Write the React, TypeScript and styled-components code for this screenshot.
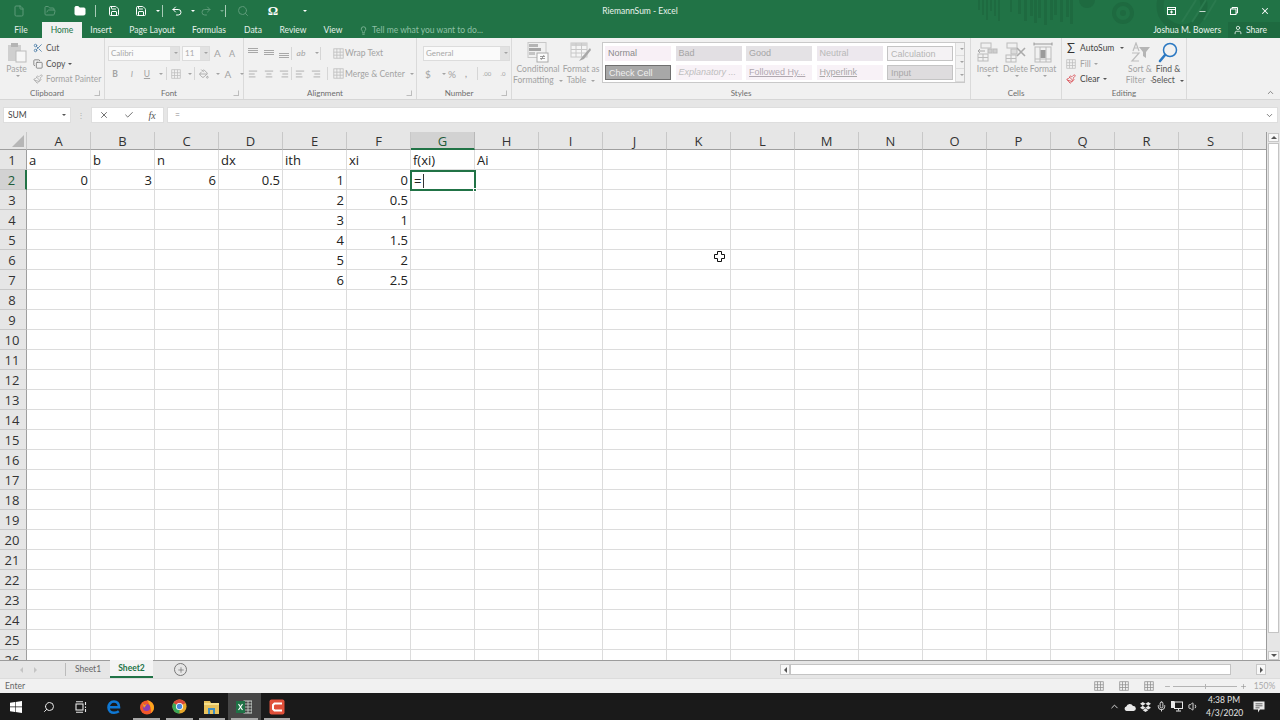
import React from 'react';
import styled, { createGlobalStyle } from 'styled-components';
import {
  AlignCenter, AlignLeft, AlignRight, Check, ChevronDown, ChevronUp, Copy, File, Folder, FolderOpen,
  Lightbulb, Mic, Minus, Paintbrush, PaintBucket, Plus, Redo2, Save, Scissors, Search, Undo2, User, Volume1, X,
} from 'lucide-react';

const GREEN = '#217346';
const UI_FONT = 'Lato, "Open Sans", "Liberation Sans", sans-serif';
const COLUMNS = 'A B C D E F G H I J K L M N O P Q R S'.split(' ');
const ROWS = Array.from({ length: 26 }, (_, i) => i + 1);

const CELLS: Record<string, string> = {
  A1: 'a', B1: 'b', C1: 'n', D1: 'dx', E1: 'ith', F1: 'xi', G1: 'f(xi)', H1: 'Ai',
  A2: '0', B2: '3', C2: '6', D2: '0.5', E2: '1', F2: '0',
  E3: '2', F3: '0.5', E4: '3', F4: '1', E5: '4', F5: '1.5', E6: '5', F6: '2', E7: '6', F7: '2.5',
};

const GlobalStyle = createGlobalStyle`
  html, body { margin: 0; padding: 0; background: #e6e6e6; overflow: hidden; }
  body { font-family: ${UI_FONT}; }
`;

const Page = styled.div`
  width: 1280px;
  height: 720px;
  display: flex;
  flex-direction: column;
  overflow: hidden;
  background: #e6e6e6;
`;

const Header = styled.header`
  position: relative;
  height: 38px;
  flex: none;
  background: ${GREEN};
  overflow: hidden;
`;

const HeaderArt = styled.svg`
  position: absolute;
  left: 960px;
  top: 0;
`;

const TitleRow = styled.div`
  position: relative;
  height: 22px;
  display: grid;
  grid-template-columns: 1fr auto 1fr;
  align-items: center;
`;

const QuickAccess = styled.div`
  display: flex;
  align-items: center;
  padding-left: 6px;
`;

const QatSlot = styled.span<{ $w: number; $faded?: boolean }>`
  width: ${(p) => p.$w}px;
  flex: none;
  display: flex;
  justify-content: center;
  align-items: center;
  color: ${(p) => (p.$faded ? '#5c9a78' : '#ffffff')};
  font-size: 13px;
  font-family: "Liberation Serif", serif;
  font-weight: 700;
`;

const QatDivider = styled.span`
  width: 1px;
  height: 12px;
  flex: none;
  background: #a8cbb7;
  margin: 0 3px;
`;

const Title = styled.div`
  color: #eaf4ee;
  font-size: 8.5px;
`;

const WindowControls = styled.div`
  display: flex;
  justify-content: flex-end;
  align-items: center;
  color: #fff;
`;

const ControlSlot = styled.span`
  width: 31px;
  display: flex;
  justify-content: center;
`;

const TabRow = styled.nav`
  position: relative;
  height: 16px;
  display: flex;
  align-items: stretch;
  font-size: 8.5px;
  color: #e4f0e9;
`;

const Tab = styled.div<{ $w: number; $active?: boolean }>`
  width: ${(p) => p.$w}px;
  display: flex;
  align-items: center;
  justify-content: center;
  background: ${(p) => (p.$active ? '#f1f1f1' : 'transparent')};
  color: ${(p) => (p.$active ? GREEN : 'inherit')};
`;

const TellMe = styled.div`
  display: flex;
  align-items: center;
  gap: 4px;
  margin-left: 7px;
  color: #8fc0a5;
`;

const Account = styled.div`
  margin-left: auto;
  display: flex;
  align-items: center;
  font-size: 8.5px;
  color: #eaf4ee;
`;

const ShareButton = styled.div`
  display: flex;
  align-items: center;
  gap: 3px;
  height: 16px;
  margin-left: 7px;
  padding: 0 13px 0 5px;
  background: #1e6a40;
`;

const Ribbon = styled.section`
  position: relative;
  height: 62px;
  flex: none;
  display: flex;
  background: #f1f1f1;
  border-bottom: 1px solid #d6d6d6;
  box-sizing: border-box;
  font-size: 8.5px;
  color: #a3a3a3;
`;

const Group = styled.div<{ $w: number }>`
  width: ${(p) => p.$w}px;
  flex: none;
  display: flex;
  flex-direction: column;
  box-sizing: border-box;
  border-right: 1px solid #dadada;
`;

const GroupBody = styled.div`
  flex: 1;
  min-height: 0;
  display: flex;
  padding-top: 2px;
`;

const GroupFoot = styled.div<{ $launcher?: boolean }>`
  position: relative;
  height: 11px;
  line-height: 11px;
  flex: none;
  text-align: center;
  color: #6d6d6d;
  font-size: 8px;
  padding-right: ${(p) => (p.$launcher ? 10 : 0)}px;
`;

const Launcher = styled.span`
  position: absolute;
  right: 4px;
  bottom: 3px;
  width: 4px;
  height: 4px;
  border: 1px solid #bdbdbd;
  border-top-color: transparent;
  border-left-color: transparent;
`;

const LargeButton = styled.div<{ $w: number; $ml?: number; $dark?: boolean }>`
  width: ${(p) => p.$w}px;
  margin-left: ${(p) => p.$ml ?? 0}px;
  padding-top: 2px;
  flex: none;
  display: flex;
  flex-direction: column;
  align-items: center;
  line-height: 11px;
  text-align: center;
  color: ${(p) => (p.$dark ? '#555' : '#a3a3a3')};
  white-space: nowrap;
  svg { margin-bottom: 1px; flex: none; }
`;

const Stack = styled.div<{ $w?: number; $gap?: number; $top?: number }>`
  ${(p) => (p.$w ? `width: ${p.$w}px;` : '')}
  flex: none;
  display: flex;
  flex-direction: column;
  gap: ${(p) => p.$gap ?? 0}px;
  padding-top: ${(p) => p.$top ?? 0}px;
`;

const ToolRow = styled.div<{ $h?: number }>`
  display: flex;
  align-items: center;
  height: ${(p) => p.$h ?? 15}px;
  white-space: nowrap;
`;

const Tool = styled.span<{ $w: number; $ml?: number; $color?: string; $bold?: boolean; $italic?: boolean; $under?: boolean; $size?: number }>`
  width: ${(p) => p.$w}px;
  margin-left: ${(p) => p.$ml ?? 0}px;
  flex: none;
  display: flex;
  align-items: center;
  justify-content: center;
  color: ${(p) => p.$color ?? '#a3a3a3'};
  font-weight: ${(p) => (p.$bold ? 700 : 400)};
  font-style: ${(p) => (p.$italic ? 'italic' : 'normal')};
  text-decoration: ${(p) => (p.$under ? 'underline' : 'none')};
  font-size: ${(p) => p.$size ?? 8.5}px;
`;

const ToolSep = styled.span<{ $ml?: number }>`
  width: 1px;
  height: 13px;
  margin-left: ${(p) => p.$ml ?? 0}px;
  background: #d6d6d6;
  flex: none;
`;

const ToolText = styled.span<{ $color?: string; $ml?: number }>`
  color: ${(p) => p.$color ?? '#a3a3a3'};
  margin-left: ${(p) => p.$ml ?? 3}px;
`;

const Combo = styled.div<{ $w: number; $ml: number }>`
  width: ${(p) => p.$w}px;
  margin-left: ${(p) => p.$ml}px;
  height: 15px;
  flex: none;
  box-sizing: border-box;
  background: #fafafa;
  border: 1px solid #dcdcdc;
  display: flex;
  align-items: center;
  justify-content: space-between;
  padding-left: 2px;
  color: #a8a8a8;
  font-size: 8px;
`;

const ComboArrow = styled.span`
  width: 9px;
  height: 100%;
  background: #e2e2e2;
  display: flex;
  align-items: center;
  justify-content: center;
`;

const Caret = styled.span<{ $color?: string }>`
  display: inline-block;
  width: 0;
  height: 0;
  border-left: 2px solid transparent;
  border-right: 2px solid transparent;
  border-top: 2px solid ${(p) => p.$color ?? '#a3a3a3'};
  margin-left: 3px;
  vertical-align: middle;
`;

const Gallery = styled.div`
  width: 363px;
  height: 41px;
  flex: none;
  box-sizing: border-box;
  border: 1px solid #c9c9c9;
  background: #fff;
  display: flex;
  margin: 2px 0 0 4px;
`;

const GalleryGrid = styled.div`
  flex: 1;
  display: grid;
  grid-template-columns: repeat(5, 66px);
  grid-auto-rows: 15px;
  column-gap: 4.5px;
  row-gap: 4px;
  padding: 3px 2px;
`;

const StyleChip = styled.div<{ $bg: string; $color: string; $border?: string; $italic?: boolean; $under?: boolean }>`
  background: ${(p) => p.$bg};
  color: ${(p) => p.$color};
  border: ${(p) => p.$border ?? 'none'};
  box-sizing: border-box;
  font-family: "Liberation Sans", sans-serif;
  font-size: 9px;
  line-height: 14px;
  padding-left: 3px;
  font-style: ${(p) => (p.$italic ? 'italic' : 'normal')};
  text-decoration: ${(p) => (p.$under ? 'underline' : 'none')};
  white-space: nowrap;
  overflow: hidden;
`;

const GalleryScroll = styled.div`
  width: 10px;
  display: flex;
  flex-direction: column;
  background: #f1f1f1;
  border-left: 1px solid #dcdcdc;
`;

const GalleryStep = styled.div`
  flex: 1;
  display: flex;
  align-items: center;
  justify-content: center;
  border-bottom: 1px solid #dcdcdc;
`;

const CollapseRibbon = styled.span`
  position: absolute;
  right: 5px;
  bottom: 0;
  color: #666;
`;

const FormulaBar = styled.div`
  height: 16px;
  flex: none;
  display: flex;
  align-items: stretch;
  margin: 7px 2px 9px 3px;
  font-size: 8.5px;
`;

const NameBox = styled.div`
  width: 68px;
  box-sizing: border-box;
  background: #fff;
  border: 1px solid #dedede;
  display: flex;
  align-items: center;
  justify-content: space-between;
  padding: 0 4px;
  color: #444;
`;

const GripDots = styled.div`
  width: 20px;
  display: flex;
  align-items: center;
  justify-content: center;
  color: #b0b0b0;
  font-size: 8px;
`;

const FormulaButtons = styled.div`
  width: 73px;
  box-sizing: border-box;
  background: #fff;
  border: 1px solid #dedede;
  display: flex;
  align-items: center;
  justify-content: space-around;
  color: #555;
`;

const FxLabel = styled.span`
  font-family: "Liberation Serif", serif;
  font-style: italic;
  font-size: 10px;
`;

const FormulaInput = styled.div`
  flex: 1;
  margin-left: 3px;
  box-sizing: border-box;
  background: #fff;
  border: 1px solid #dedede;
  display: flex;
  align-items: center;
  justify-content: space-between;
  padding: 0 3px 0 7px;
  color: #888;
`;

const SheetArea = styled.div`
  height: 528px;
  flex: none;
  display: flex;
  overflow: hidden;
`;

const Grid = styled.div`
  position: relative;
  width: 1267px;
  flex: none;
  display: grid;
  grid-template-columns: 27px repeat(19, 64px) 24px;
  grid-template-rows: 18px;
  grid-auto-rows: 20px;
  overflow: hidden;
  background: #fff;
  box-sizing: border-box;
  border-right: 1px solid #9c9c9c;
  font-family: "Open Sans", "Noto Sans", sans-serif;
  font-size: 13px;
  color: #222;
`;

const Corner = styled.div`
  position: relative;
  background: #e6e6e6;
  border-right: 1px solid #c8c8c8;
  border-bottom: 1px solid #9f9f9f;
  box-sizing: border-box;
  &::after {
    content: '';
    position: absolute;
    right: 2px;
    bottom: 2px;
    border-left: 12px solid transparent;
    border-bottom: 12px solid #b6b6b6;
  }
`;

const ColumnHead = styled.div<{ $active?: boolean }>`
  background: ${(p) => (p.$active ? '#d2d2d2' : '#e6e6e6')};
  border-right: 1px solid ${(p) => (p.$active ? '#b8b8b8' : '#c8c8c8')};
  border-bottom: ${(p) => (p.$active ? `2px solid ${GREEN}` : '1px solid #9f9f9f')};
  box-sizing: border-box;
  display: flex;
  align-items: center;
  justify-content: center;
  padding-top: 1px;
  color: ${(p) => (p.$active ? '#1f5c3a' : '#333')};
`;

const RowHead = styled.div<{ $active?: boolean }>`
  background: ${(p) => (p.$active ? '#d2d2d2' : '#e6e6e6')};
  border-right: ${(p) => (p.$active ? `2px solid ${GREEN}` : '1px solid #9f9f9f')};
  border-bottom: 1px solid #c8c8c8;
  box-sizing: border-box;
  display: flex;
  align-items: center;
  justify-content: center;
  padding: 1px 2px 0 0;
  color: ${(p) => (p.$active ? '#1f5c3a' : '#333')};
`;

const Cell = styled.div<{ $numeric?: boolean }>`
  border-right: 1px solid #dcdcdc;
  border-bottom: 1px solid #dcdcdc;
  box-sizing: border-box;
  display: flex;
  align-items: center;
  justify-content: ${(p) => (p.$numeric ? 'flex-end' : 'flex-start')};
  padding: 1px 2px 0 2px;
  white-space: nowrap;
  overflow: visible;
`;

const ActiveCell = styled.div`
  position: relative;
  box-sizing: border-box;
  border: 2px solid ${GREEN};
  margin: 0 -1px 0 -1px;
  height: 21px;
  display: flex;
  align-items: center;
  padding-left: 2px;
  z-index: 1;
  &::after {
    content: '';
    position: absolute;
    right: -3px;
    bottom: -3px;
    width: 4px;
    height: 4px;
    background: ${GREEN};
    border: 1px solid #fff;
    box-sizing: border-box;
  }
`;

const TextCaret = styled.span`
  width: 1px;
  height: 14px;
  margin-left: 2px;
  background: #333;
`;

const MouseCursor = styled.svg`
  position: absolute;
  left: 714px;
  top: 119px;
  z-index: 2;
`;

const VerticalScroll = styled.div`
  flex: 1;
  display: flex;
  flex-direction: column;
  padding: 1px 1px 0 1px;
  background: #e6e6e6;
`;

const ScrollButton = styled.div`
  height: 9px;
  flex: none;
  background: #f8f8f8;
  border: 1px solid #c8c8c8;
  box-sizing: border-box;
  display: flex;
  align-items: center;
  justify-content: center;
`;

const ScrollThumb = styled.div`
  width: 100%;
  height: 490px;
  margin-top: 1px;
  box-sizing: border-box;
  background: #fff;
  border: 1px solid #c4c4c4;
`;

const ScrollTrack = styled.div`
  flex: 1;
`;

const SheetBar = styled.div`
  height: 18px;
  flex: none;
  display: flex;
  align-items: stretch;
  border-top: 1px solid #9c9c9c;
  box-sizing: border-box;
  font-size: 8.5px;
  color: #666;
`;

const SheetNav = styled.div`
  width: 66px;
  display: flex;
  align-items: center;
  justify-content: space-evenly;
  padding: 0 16px 0 8px;
  box-sizing: border-box;
  border-right: 1px solid #bbb;
  margin: 2px 0;
`;

const SheetTab = styled.div<{ $active?: boolean; $w: number }>`
  width: ${(p) => p.$w}px;
  display: flex;
  align-items: center;
  justify-content: center;
  font-weight: ${(p) => (p.$active ? 700 : 400)};
  color: ${(p) => (p.$active ? GREEN : '#666')};
  background: ${(p) => (p.$active ? '#f4f4f4' : 'transparent')};
  border-bottom: ${(p) => (p.$active ? `2px solid ${GREEN}` : 'none')};
  box-sizing: border-box;
  margin-top: -1px;
`;

const AddSheet = styled.div`
  width: 11px;
  height: 11px;
  margin: 2px 0 0 21px;
  border-radius: 50%;
  border: 1px solid #777;
  display: flex;
  align-items: center;
  justify-content: center;
  color: #666;
`;

const HorizontalScroll = styled.div`
  margin-left: auto;
  width: 486px;
  margin-right: 14px;
  display: flex;
  align-items: center;
`;

const HScrollButton = styled.div`
  width: 10px;
  height: 11px;
  flex: none;
  box-sizing: border-box;
  background: #f8f8f8;
  border: 1px solid #c8c8c8;
  display: flex;
  align-items: center;
  justify-content: center;
`;

const HScrollThumb = styled.div`
  width: 441px;
  height: 11px;
  box-sizing: border-box;
  background: #fff;
  border: 1px solid #c4c4c4;
  flex: none;
`;

const HScrollRest = styled.div`
  flex: 1;
`;

const TriLeft = styled.span<{ $color?: string }>`
  border-top: 3px solid transparent;
  border-bottom: 3px solid transparent;
  border-right: 3px solid ${(p) => p.$color ?? '#555'};
`;

const TriRight = styled.span<{ $color?: string }>`
  border-top: 3px solid transparent;
  border-bottom: 3px solid transparent;
  border-left: 3px solid ${(p) => p.$color ?? '#555'};
`;

const TriUp = styled.span`
  border-left: 3px solid transparent;
  border-right: 3px solid transparent;
  border-bottom: 3px solid #555;
`;

const TriDown = styled.span`
  border-left: 3px solid transparent;
  border-right: 3px solid transparent;
  border-top: 3px solid #555;
`;

const StatusBar = styled.footer`
  height: 15px;
  flex: none;
  display: flex;
  align-items: center;
  padding-left: 5px;
  font-size: 8.5px;
  color: #666;
  background: #f1f1f1;
  border-top: 1px solid #dcdcdc;
  box-sizing: border-box;
`;

const StatusRight = styled.div`
  margin-left: auto;
  display: flex;
  align-items: center;
  color: #8d8d8d;
`;

const ViewSlot = styled.span<{ $w: number }>`
  width: ${(p) => p.$w}px;
  display: flex;
  justify-content: center;
`;

const ZoomTrack = styled.span`
  position: relative;
  width: 64px;
  height: 1px;
  background: #b4b4b4;
  &::after {
    content: '';
    position: absolute;
    left: 32px;
    top: -2px;
    width: 1px;
    height: 5px;
    background: #b4b4b4;
  }
`;

const ZoomValue = styled.span`
  width: 31px;
  text-align: center;
  color: #aaa;
`;

const Taskbar = styled.footer`
  height: 27px;
  flex: none;
  display: flex;
  align-items: stretch;
  background: #1a1a1a;
  color: #e8e8e8;
`;

const TaskSlot = styled.div<{ $open?: boolean; $current?: boolean }>`
  position: relative;
  width: 32.6px;
  flex: none;
  display: flex;
  align-items: center;
  justify-content: center;
  background: ${(p) => (p.$current ? '#464646' : 'transparent')};
  &::after {
    content: '';
    display: ${(p) => (p.$open ? 'block' : 'none')};
    position: absolute;
    left: 3px;
    right: 3px;
    bottom: 0;
    height: 2px;
    background: #a8a8a8;
  }
`;

const MirroredSearch = styled(Search)`
  transform: scaleX(-1);
`;

const Tray = styled.div`
  margin-left: auto;
  display: flex;
  align-items: center;
`;

const TraySlot = styled.span`
  width: 15.8px;
  display: flex;
  justify-content: center;
`;

const Clock = styled.div`
  width: 36px;
  margin-left: 5px;
  text-align: center;
  font-size: 8.5px;
  line-height: 13px;
  color: #e4e4e4;
  white-space: nowrap;
`;

const Notify = styled.div`
  width: 38px;
  display: flex;
  justify-content: center;
  padding-right: 4px;
  box-sizing: border-box;
`;

/* ---- drawn icons ---- */

const SheetGlyph = ({ w = 20, h = 20, color = '#bdbdbd' }: { w?: number; h?: number; color?: string }) => (
  <svg width={w} height={h} viewBox="0 0 20 20" fill="none" stroke={color} strokeWidth="1.5">
    <rect x="1.5" y="1.5" width="17" height="17" />
    <path d="M1.5 7.5h17M1.5 13h17M7 1.5v17M13 1.5v17" />
  </svg>
);

const VAlignIcon = ({ y }: { y: number }) => (
  <svg width="10" height="10" viewBox="0 0 10 10" stroke="#a8a8a8">
    <path d={`M0 ${y + 0.5}h10M0 ${y + 2.5}h10`} />
    <path d={`M0 ${y + 4.5}h10`} />
  </svg>
);

const PasteIcon = () => (
  <svg width="20" height="21" viewBox="0 0 20 21">
    <rect x="1" y="3" width="13" height="16" fill="#cfcfcf" />
    <rect x="4" y="1" width="7" height="4" fill="#b4b4b4" />
    <rect x="9" y="9" width="10" height="11" fill="#f6f6f6" stroke="#bbb" />
  </svg>
);

const CondFormatIcon = () => (
  <svg width="22" height="21" viewBox="0 0 22 21">
    <rect x="1" y="0.5" width="18" height="15" fill="#f1f1f1" stroke="#c8c8c8" />
    <rect x="2" y="2" width="9" height="3" fill="#b5b5b5" />
    <rect x="2" y="6" width="12" height="3" fill="#a6a6a6" />
    <rect x="2" y="10" width="6" height="3" fill="#c4c4c4" />
    <rect x="10" y="11" width="11" height="9" fill="#fbfbfb" stroke="#aaa" />
    <path d="M13 14.5h5M13 16.5h5M17 13l-3 5" stroke="#888" strokeWidth="0.8" />
  </svg>
);

const TableIcon = () => (
  <svg width="22" height="21" viewBox="0 0 22 21" fill="none">
    <rect x="1" y="1" width="16" height="14" fill="#f5f5f5" stroke="#c8c8c8" />
    <rect x="1" y="1" width="16" height="3" fill="#d2d2d2" />
    <path d="M1 7.5h16M1 11h16M6 1v14M11.5 1v14" stroke="#c8c8c8" />
    <path d="M20 6l-8 9-3 4 5-2 7-9z" fill="#a8a8a8" />
  </svg>
);

const InsertCellsIcon = () => (
  <svg width="22" height="21" viewBox="0 0 22 21" fill="none" stroke="#bcbcbc">
    <rect x="4" y="1" width="10" height="5" />
    <rect x="1" y="12" width="10" height="7" />
    <path d="M1 15.5h10M6 12v7" />
    <path d="M1 9h7M3 7l-2 2 2 2" stroke="#a8a8a8" />
    <rect x="11" y="7" width="4" height="4" fill="#cfcfcf" />
    <rect x="16" y="7" width="4" height="4" fill="#cfcfcf" />
  </svg>
);

const DeleteCellsIcon = () => (
  <svg width="22" height="21" viewBox="0 0 22 21" fill="none" stroke="#bcbcbc">
    <rect x="2" y="1" width="10" height="5" />
    <rect x="1" y="13" width="10" height="7" />
    <path d="M1 16.5h10M6 13v7" />
    <rect x="6" y="7" width="6" height="5" fill="#dcdcdc" />
    <path d="M12 6l8 8M20 6l-8 8" stroke="#aaa" strokeWidth="1.6" />
  </svg>
);

const FormatCellsIcon = () => (
  <svg width="20" height="21" viewBox="0 0 20 21" fill="none" stroke="#bcbcbc">
    <path d="M1 2h18M1 0.5v3M19 0.5v3" stroke="#999" />
    <rect x="2" y="5" width="16" height="15" />
    <path d="M7 5v15M13 5v15M2 17h16" />
    <rect x="7.5" y="8" width="5" height="8" fill="#9a9a9a" stroke="none" />
  </svg>
);

const SortIcon = () => (
  <svg width="22" height="21" viewBox="0 0 22 21">
    <path d="M4 9l3-8 3 8M5 6h4M3 11h7l-7 8h7" fill="none" stroke="#bdbdbd" strokeWidth="1.2" />
    <path d="M10 5h11l-4 5v6l-3-2v-4z" fill="#b5b5b5" />
  </svg>
);

const FindIcon = () => (
  <svg width="20" height="21" viewBox="0 0 20 21" fill="none" stroke="#2b78c2">
    <circle cx="12" cy="8" r="6.5" strokeWidth="1.5" />
    <path d="M7 13l-5 6" strokeWidth="2.6" strokeLinecap="round" />
  </svg>
);

const WindowsLogo = () => (
  <svg width="12" height="12" viewBox="0 0 12 12" fill="#fff">
    <path d="M0 1.7L5 1v4.6H0zM5.6 0.9L12 0v5.6H5.6zM0 6.2h5v4.7L0 10.3zM5.6 6.2H12V12L5.6 11z" />
  </svg>
);

const TaskViewIcon = () => (
  <svg width="13" height="12" viewBox="0 0 13 12" fill="none" stroke="#e8e8e8" strokeWidth="1.1">
    <rect x="1" y="3" width="7" height="6" />
    <path d="M1 0.8h7M1 11.2h7M10.5 1v3M10.5 5.5v1.5M10.5 8v3" />
  </svg>
);

const EdgeLogo = () => (
  <svg width="14" height="14" viewBox="0 0 14 14" fill="none" stroke="#0f78d4" strokeWidth="2.6">
    <path d="M2 7.3h10C12 3.5 10 1.5 7 1.5 3.5 1.5 1.5 4.5 1.5 7.5c0 3.5 2.5 5.2 5.5 5.2 2 0 3.5-.5 4.8-1.4" />
  </svg>
);

const FirefoxLogo = () => (
  <svg width="16" height="16" viewBox="0 0 16 16">
    <circle cx="8" cy="8.5" r="7" fill="#f2572b" />
    <path d="M8 1c4 1 7 4 7 7.5 0 2-1 4-3 5.5 1-3-1-8-4-13z" fill="#fba61d" />
    <circle cx="7.5" cy="8.5" r="3.6" fill="#8a3fb5" />
    <path d="M3 3l2 3 3-1-3 4z" fill="#f9a11c" />
  </svg>
);

const ChromeLogo = () => (
  <svg width="15" height="15" viewBox="0 0 16 16">
    <circle cx="8" cy="8" r="7.5" fill="#e8a82a" />
    <path d="M8 8L1.5 4.2A7.5 7.5 0 0 1 14.5 4.2z" fill="#d9483b" />
    <path d="M8 8L1.5 4.2A7.5 7.5 0 0 0 8 15.5z" fill="#3aa757" />
    <circle cx="8" cy="8" r="3.8" fill="#fff" />
    <circle cx="8" cy="8" r="2.9" fill="#4a89dc" />
  </svg>
);

const ExplorerLogo = () => (
  <svg width="15" height="14" viewBox="0 0 15 14">
    <path d="M0 1h6l1 2h8v11H0z" fill="#e8c25c" />
    <rect x="0" y="3" width="15" height="2" fill="#f6e08c" />
    <rect x="4" y="8" width="7" height="6" fill="#3f8fc4" />
    <rect x="6" y="10" width="3" height="4" fill="#e8c25c" />
  </svg>
);

const ExcelLogo = () => (
  <svg width="16" height="14" viewBox="0 0 16 14">
    <rect x="8" y="1" width="8" height="12" fill="none" stroke="#cfd8d2" />
    <path d="M8 4h8M8 7h8M8 10h8M12 1v12" stroke="#cfd8d2" strokeWidth="0.8" />
    <rect x="0" y="1" width="9" height="12" fill="#1f7246" />
    <path d="M2.5 4l4 6M6.5 4l-4 6" stroke="#fff" strokeWidth="1.2" />
  </svg>
);

const CamtasiaLogo = () => (
  <svg width="16" height="16" viewBox="0 0 16 16">
    <rect x="0.5" y="0.5" width="15" height="15" rx="2" fill="#e0503a" />
    <path d="M13 4.5H5.5L4 6v4l1.5 1.5H13" fill="none" stroke="#fff" strokeWidth="2" />
  </svg>
);

const CloudIcon = () => (
  <svg width="12" height="8" viewBox="0 0 12 8" fill="#e8e8e8">
    <path d="M2.5 8A2.3 2.3 0 0 1 2.3 3.5 3.7 3.7 0 0 1 9 3a2.5 2.5 0 0 1 .6 5z" />
  </svg>
);

const DropboxIcon = () => (
  <svg width="11" height="10" viewBox="0 0 12 11" fill="#e8e8e8">
    <path d="M3 0l3 2-3 2-3-2zM9 0l3 2-3 2-3-2zM3 4.2l3 2-3 2-3-2zM9 4.2l3 2-3 2-3-2zM3 9l3-2 3 2-3 2z" />
  </svg>
);

const NetworkIcon = () => (
  <svg width="12" height="11" viewBox="0 0 12 11" fill="none" stroke="#e8e8e8">
    <rect x="3.5" y="1" width="8" height="6.5" />
    <rect x="0.5" y="0.5" width="2.5" height="6" fill="#e8e8e8" />
    <path d="M7.5 7.5v2M5 10h5" />
  </svg>
);

const NotifyIcon = () => (
  <svg width="12" height="12" viewBox="0 0 12 12">
    <path d="M0.5 0.5h11v8H7l-2 3v-3H0.5z" fill="#e8e8e8" />
    <path d="M2.5 2.8h7M2.5 4.8h7M2.5 6.8h4" stroke="#444" strokeWidth="0.8" />
  </svg>
);

const HeaderPattern = () => (
  <HeaderArt width="260" height="38" viewBox="0 0 260 38">
    <g fill="#1e6a40">
      {[18, 22, 26, 30, 34, 38, 50].map((x, i) => (
        <rect key={x} x={x} width="2" height={10 + ((i * 5) % 14)} />
      ))}
      {[58, 64, 70, 74, 78, 84, 90, 94, 100, 106, 110].map((x, i) => (
        <rect key={x} x={x} width="3" height={14 + ((i * 7) % 12)} />
      ))}
      <circle cx="127" cy="0" r="8" />
    </g>
    <circle cx="163" cy="13" r="9" fill="none" stroke="#1e6a40" strokeWidth="4" />
    <circle cx="163" cy="13" r="3" fill="#1e6a40" />
    <circle cx="222" cy="6" r="22" fill="none" stroke="#1e6a40" strokeWidth="7" />
    <path d="M236 0l-14 22M246 0l-14 22M256 0l-12 20" stroke="#2a7a4e" strokeWidth="2" />
  </HeaderArt>
);

const RibbonGroup = ({ w, label, children, launcher }: { w: number; label: string; children: React.ReactNode; launcher?: boolean }) => (
  <Group $w={w}>
    <GroupBody>{children}</GroupBody>
    <GroupFoot $launcher={launcher}>
      {label}
      {launcher && <Launcher />}
    </GroupFoot>
  </Group>
);

const App = () => {
  const tabs: [string, number, boolean?][] = [
    ['File', 42],
    ['Home', 40, true],
    ['Insert', 38],
    ['Page Layout', 64],
    ['Formulas', 50],
    ['Data', 38],
    ['Review', 42],
    ['View', 38],
  ];

  return (
    <Page>
      <GlobalStyle />
      <Header>
        <HeaderPattern />
        <TitleRow>
          <QuickAccess>
            <QatSlot $w={25} $faded><File size={12} /></QatSlot>
            <QatSlot $w={37} $faded><FolderOpen size={12} /></QatSlot>
            <QatSlot $w={24}><Folder size={12} fill="#fff" /></QatSlot>
            <QatDivider />
            <QatSlot $w={30}><Save size={12} /></QatSlot>
            <QatSlot $w={24}><Save size={12} /></QatSlot>
            <QatSlot $w={6}><Caret $color="#fff" /></QatSlot>
            <QatDivider />
            <QatSlot $w={22}><Undo2 size={12} /></QatSlot>
            <QatSlot $w={6}><Caret $color="#fff" /></QatSlot>
            <QatSlot $w={24} $faded><Redo2 size={12} /></QatSlot>
            <QatSlot $w={4}><Caret $color="#6fa98a" /></QatSlot>
            <QatDivider />
            <QatSlot $w={28} $faded><Search size={12} /></QatSlot>
            <QatSlot $w={32}>Ω</QatSlot>
            <QatSlot $w={28}><Caret $color="#fff" /></QatSlot>
          </QuickAccess>
          <Title>RiemannSum - Excel</Title>
          <WindowControls>
            <ControlSlot>
              <svg width="9" height="8" viewBox="0 0 9 8" fill="none" stroke="#fff"><rect x="0.5" y="0.5" width="8" height="7" /><path d="M0.5 2.5h8M4.5 3.5v3M3 5h3" /></svg>
            </ControlSlot>
            <ControlSlot><Minus size={9} strokeWidth={2} /></ControlSlot>
            <ControlSlot>
              <svg width="8" height="8" viewBox="0 0 8 8" fill="none" stroke="#fff"><rect x="0.5" y="2" width="5.5" height="5.5" /><path d="M2 2V0.5h5.5V6H6" /></svg>
            </ControlSlot>
            <ControlSlot><X size={10} strokeWidth={2.5} /></ControlSlot>
          </WindowControls>
        </TitleRow>
        <TabRow>
          {tabs.map(([name, w, active]) => (
            <Tab key={name} $w={w} $active={active}>{name}</Tab>
          ))}
          <TellMe><Lightbulb size={9} />Tell me what you want to do...</TellMe>
          <Account>
            Joshua M. Bowers
            <ShareButton><User size={10} />Share</ShareButton>
          </Account>
        </TabRow>
      </Header>

      <Ribbon>
        <RibbonGroup w={105} label="Clipboard" launcher>
          <LargeButton $w={33}><PasteIcon />Paste<Caret /></LargeButton>
          <Stack>
            <ToolRow $h={16}><Scissors size={10} color="#4d7ea8" /><ToolText $color="#555">Cut</ToolText></ToolRow>
            <ToolRow $h={15}><Copy size={10} color="#777" /><ToolText $color="#555">Copy</ToolText><Caret $color="#555" /></ToolRow>
            <ToolRow $h={15}><Paintbrush size={10} color="#aaa" /><ToolText>Format Painter</ToolText></ToolRow>
          </Stack>
        </RibbonGroup>

        <RibbonGroup w={139} label="Font" launcher>
          <Stack $gap={5} $top={5}>
            <ToolRow $h={16}>
              <Combo $ml={3} $w={72}>Calibri<ComboArrow><Caret /></ComboArrow></Combo>
              <Combo $ml={2} $w={28}>11<ComboArrow><Caret /></ComboArrow></Combo>
              <Tool $w={15} $size={10}>A</Tool>
              <Tool $w={14} $size={9}>A</Tool>
            </ToolRow>
            <ToolRow>
              <Tool $w={20} $bold>B</Tool>
              <Tool $w={14} $italic>I</Tool>
              <Tool $w={16} $under>U</Tool>
              <Tool $w={8}><Caret /></Tool>
              <ToolSep $ml={3} />
              <Tool $w={18}><SheetGlyph w={10} h={10} /></Tool>
              <Tool $w={6}><Caret /></Tool>
              <ToolSep $ml={3} />
              <Tool $w={18}><PaintBucket size={10} /></Tool>
              <Tool $w={6}><Caret /></Tool>
              <Tool $w={18} $size={10}>A</Tool>
              <Tool $w={6}><Caret /></Tool>
            </ToolRow>
          </Stack>
        </RibbonGroup>

        <RibbonGroup w={173} label="Alignment" launcher>
          <Stack $gap={5} $top={5}>
            <ToolRow $h={16}>
              <Tool $w={17}><VAlignIcon y={0} /></Tool>
              <Tool $w={15}><VAlignIcon y={2} /></Tool>
              <Tool $w={15}><VAlignIcon y={5} /></Tool>
              <ToolSep />
              <Tool $w={18} $italic>ab</Tool>
              <Tool $w={10}><Caret /></Tool>
              <ToolSep />
              <Tool $w={12} $ml={11}><SheetGlyph w={11} h={11} /></Tool>
              <ToolText $ml={1}>Wrap Text</ToolText>
            </ToolRow>
            <ToolRow>
              <Tool $w={17}><AlignLeft size={10} /></Tool>
              <Tool $w={15}><AlignCenter size={10} /></Tool>
              <Tool $w={15}><AlignRight size={10} /></Tool>
              <ToolSep />
              <Tool $w={16}><AlignLeft size={10} /></Tool>
              <Tool $w={16}><AlignRight size={10} /></Tool>
              <ToolSep $ml={3} />
              <Tool $w={12} $ml={4}><SheetGlyph w={11} h={11} /></Tool>
              <ToolText $ml={1}>Merge &amp; Center</ToolText>
              <Tool $w={12}><Caret /></Tool>
            </ToolRow>
          </Stack>
        </RibbonGroup>

        <RibbonGroup w={95} label="Number" launcher>
          <Stack $gap={5} $top={5}>
            <ToolRow $h={16}>
              <Combo $ml={6} $w={87}>General<ComboArrow><Caret /></ComboArrow></Combo>
            </ToolRow>
            <ToolRow>
              <Tool $w={22} $size={10}>$</Tool>
              <Tool $w={6}><Caret /></Tool>
              <Tool $w={14} $size={10}>%</Tool>
              <Tool $w={14} $bold>,</Tool>
              <ToolSep $ml={4} />
              <Tool $w={18} $size={6}>.00</Tool>
              <Tool $w={14} $size={6}>.0</Tool>
            </ToolRow>
          </Stack>
        </RibbonGroup>

        <RibbonGroup w={459} label="Styles">
          <LargeButton $w={52}><CondFormatIcon />Conditional<span>Formatting <Caret /></span></LargeButton>
          <LargeButton $w={34}><TableIcon />Format as<span>Table <Caret /></span></LargeButton>
          <Gallery>
            <GalleryGrid>
              <StyleChip $bg="#f8f0f6" $color="#8a8a8a">Normal</StyleChip>
              <StyleChip $bg="#e2dfe3" $color="#a5a5a5">Bad</StyleChip>
              <StyleChip $bg="#e4e2e5" $color="#a5a5a5">Good</StyleChip>
              <StyleChip $bg="#ede8ee" $color="#b8b8b8">Neutral</StyleChip>
              <StyleChip $bg="#f4f2f4" $color="#b5b5b5" $border="1px solid #c4c4c4">Calculation</StyleChip>
              <StyleChip $bg="#a8a8a8" $color="#efefef" $border="1px solid #6f6f6f">Check Cell</StyleChip>
              <StyleChip $bg="#f8f2f7" $color="#bdbdbd" $italic>Explanatory ...</StyleChip>
              <StyleChip $bg="#f8f2f7" $color="#b0a8b0" $under>Followed Hy...</StyleChip>
              <StyleChip $bg="#f8f2f7" $color="#a8a8a8" $under>Hyperlink</StyleChip>
              <StyleChip $bg="#dedcde" $color="#a8a8a8" $border="1px solid #c4c4c4">Input</StyleChip>
            </GalleryGrid>
            <GalleryScroll>
              <GalleryStep><Caret /></GalleryStep>
              <GalleryStep><Caret /></GalleryStep>
              <GalleryStep><Caret /></GalleryStep>
            </GalleryScroll>
          </Gallery>
        </RibbonGroup>

        <RibbonGroup w={91} label="Cells">
          <LargeButton $w={31} $ml={1}><InsertCellsIcon />Insert<Caret /></LargeButton>
          <LargeButton $w={25}><DeleteCellsIcon />Delete<Caret /></LargeButton>
          <LargeButton $w={30}><FormatCellsIcon />Format<Caret /></LargeButton>
        </RibbonGroup>

        <RibbonGroup w={125} label="Editing">
          <Stack $w={64}>
            <ToolRow $h={16}><Tool $w={18} $color="#333" $size={13}>Σ</Tool><ToolText $color="#444" $ml={0}>AutoSum</ToolText><Tool $w={12}><Caret $color="#555" /></Tool></ToolRow>
            <ToolRow $h={15}><Tool $w={18}><SheetGlyph w={10} h={10} /></Tool><ToolText $ml={0}>Fill</ToolText><Caret /></ToolRow>
            <ToolRow $h={15}><Tool $w={18} $color="#d9484f"><Paintbrush size={10} /></Tool><ToolText $color="#444" $ml={0}>Clear</ToolText><Caret $color="#555" /></ToolRow>
          </Stack>
          <LargeButton $w={28}><SortIcon />Sort &amp;<span>Filter <Caret /></span></LargeButton>
          <LargeButton $w={28} $dark><FindIcon />Find &amp;<span>Select <Caret $color="#555" /></span></LargeButton>
        </RibbonGroup>
        <CollapseRibbon><ChevronUp size={9} /></CollapseRibbon>
      </Ribbon>

      <FormulaBar>
        <NameBox>SUM<Caret $color="#555" /></NameBox>
        <GripDots>⋮</GripDots>
        <FormulaButtons>
          <X size={10} />
          <Check size={10} />
          <FxLabel>fx</FxLabel>
        </FormulaButtons>
        <FormulaInput>=<ChevronDown size={9} color="#555" /></FormulaInput>
      </FormulaBar>

      <SheetArea>
        <Grid>
          <Corner />
          {COLUMNS.map((c) => <ColumnHead key={c} $active={c === 'G'}>{c}</ColumnHead>)}
          <ColumnHead />
          {ROWS.map((row) => (
            <React.Fragment key={row}>
              <RowHead $active={row === 2}>{row}</RowHead>
              {COLUMNS.map((col) => {
                const id = `${col}${row}`;
                if (id === 'G2') return <ActiveCell key={id}>=<TextCaret /></ActiveCell>;
                const value = CELLS[id];
                return <Cell key={id} $numeric={value !== undefined && !isNaN(Number(value))}>{value}</Cell>;
              })}
              <Cell />
            </React.Fragment>
          ))}
          <MouseCursor width="11" height="11" viewBox="0 0 11 11">
            <path d="M3.5 0.5h4v3h3v4h-3v3h-4v-3h-3v-4h3z" fill="#fff" stroke="#111" />
          </MouseCursor>
        </Grid>
        <VerticalScroll>
          <ScrollButton><TriUp /></ScrollButton>
          <ScrollThumb />
          <ScrollTrack />
          <ScrollButton><TriDown /></ScrollButton>
        </VerticalScroll>
      </SheetArea>

      <SheetBar>
        <SheetNav>
          <TriLeft $color="#c4c4c4" />
          <TriRight $color="#c4c4c4" />
        </SheetNav>
        <SheetTab $w={44}>Sheet1</SheetTab>
        <SheetTab $w={43} $active>Sheet2</SheetTab>
        <AddSheet><Plus size={8} /></AddSheet>
        <HorizontalScroll>
          <HScrollButton><TriLeft /></HScrollButton>
          <HScrollThumb />
          <HScrollRest />
          <HScrollButton><TriRight /></HScrollButton>
        </HorizontalScroll>
      </SheetBar>

      <StatusBar>
        Enter
        <StatusRight>
          <ViewSlot $w={25}><SheetGlyph w={10} h={10} color="#8d8d8d" /></ViewSlot>
          <ViewSlot $w={25}><SheetGlyph w={10} h={10} color="#8d8d8d" /></ViewSlot>
          <ViewSlot $w={25}><SheetGlyph w={10} h={10} color="#8d8d8d" /></ViewSlot>
          <ViewSlot $w={12}><Minus size={7} /></ViewSlot>
          <ZoomTrack />
          <ViewSlot $w={12}><Plus size={7} /></ViewSlot>
          <ZoomValue>150%</ZoomValue>
        </StatusRight>
      </StatusBar>

      <Taskbar>
        <TaskSlot><WindowsLogo /></TaskSlot>
        <TaskSlot><MirroredSearch size={12} /></TaskSlot>
        <TaskSlot><TaskViewIcon /></TaskSlot>
        <TaskSlot><EdgeLogo /></TaskSlot>
        <TaskSlot $open><FirefoxLogo /></TaskSlot>
        <TaskSlot $open><ChromeLogo /></TaskSlot>
        <TaskSlot $open><ExplorerLogo /></TaskSlot>
        <TaskSlot $open $current><ExcelLogo /></TaskSlot>
        <TaskSlot $open><CamtasiaLogo /></TaskSlot>
        <Tray>
          <TraySlot><ChevronUp size={11} /></TraySlot>
          <TraySlot><CloudIcon /></TraySlot>
          <TraySlot><DropboxIcon /></TraySlot>
          <TraySlot><Mic size={11} /></TraySlot>
          <TraySlot><NetworkIcon /></TraySlot>
          <TraySlot><Volume1 size={11} /></TraySlot>
          <Clock>4:38 PM<br />4/3/2020</Clock>
          <Notify><NotifyIcon /></Notify>
        </Tray>
      </Taskbar>
    </Page>
  );
};

export default App;
